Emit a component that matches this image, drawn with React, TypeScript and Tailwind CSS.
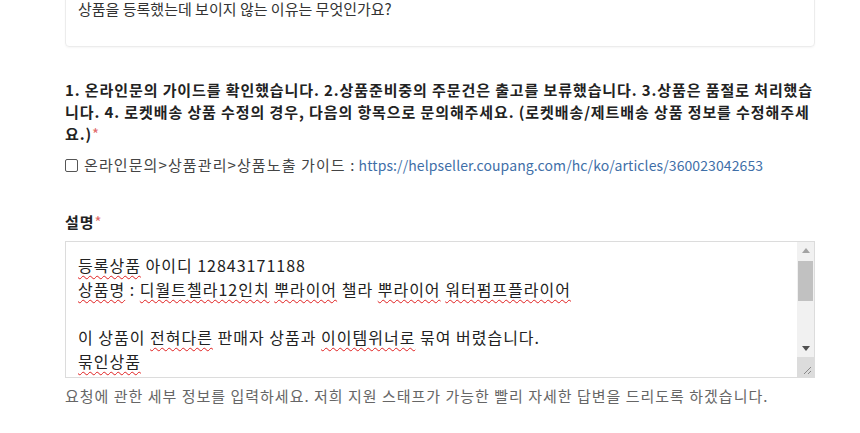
import React from 'react';

const font = { fontFamily: '"Noto Sans CJK KR", "Noto Sans", sans-serif' };

const Wavy: React.FC<{ children: React.ReactNode }> = ({ children }) => (
  <span className="underline decoration-wavy decoration-[#e02020] decoration-1 underline-offset-[3px]">
    {children}
  </span>
);

const Required = () => <span className="text-[#e06a6a] font-normal">*</span>;

const FakeScrollbar = () => (
  <div className="w-[17px] bg-[#f1f1f1] flex flex-col shrink-0">
    <div className="h-[17px] flex items-center justify-center">
      <svg width="8" height="5" viewBox="0 0 8 5">
        <path d="M0 5 L4 0 L8 5 Z" fill="#a3a3a3" />
      </svg>
    </div>
    <div className="h-[40px] bg-[#c1c1c1] mx-[1px] mt-[2px]" />
    <div className="flex-1" />
    <div className="h-[17px] flex items-center justify-center">
      <svg width="8" height="5" viewBox="0 0 8 5">
        <path d="M0 0 L8 0 L4 5 Z" fill="#505050" />
      </svg>
    </div>
    <div className="h-[20px] bg-[#dcdcdc] flex items-end justify-end p-[2px]">
      <svg width="10" height="10" viewBox="0 0 10 10">
        <path d="M9 2 L2 9 M9 6 L6 9" stroke="#888" strokeWidth="1" />
      </svg>
    </div>
  </div>
);

export default function App() {
  return (
    <div className="w-[860px] h-[433px] overflow-hidden bg-white text-[#222]" style={font}>
      <div className="px-[65px] pr-[45px]">
        <div className="-mt-[20px] border border-[#ececec] rounded-[4px] shadow-[0_1px_2px_rgba(0,0,0,0.04)] px-[12px] pt-[17px] pb-[26px] text-[15px] leading-[22px] text-[#333]">
          상품을 등록했는데 보이지 않는 이유는 무엇인가요?
        </div>

        <p className="mt-[32px] text-[15px] leading-[22px] tracking-[0.9px] font-bold text-[#222] pr-[2px]">
          1. 온라인문의 가이드를 확인했습니다. 2.상품준비중의 주문건은 출고를 보류했습니다. 3.상품은 품절로 처리했습니다. 4. 로켓배송 상품 수정의 경우, 다음의 항목으로 문의해주세요. (로켓배송/제트배송 상품 정보를 수정해주세요.)
          <Required />
        </p>

        <label className="mt-[9px] flex items-center gap-[6px] text-[14px] leading-[22px] text-[#444]">
          <span className="w-[13px] h-[13px] border border-[#555] rounded-[2px] bg-white shrink-0" />
          <span>
            <span className="text-[15px] tracking-[1.1px]">온라인문의&gt;상품관리&gt;상품노출 가이드 :</span>{' '}
            <a className="text-[#3f6fa8] tracking-[0.1px]">https://helpseller.coupang.com/hc/ko/articles/360023042653</a>
          </span>
        </label>

        <div className="mt-[35px] text-[15px] leading-[22px] tracking-[1px] font-bold text-[#222]">
          설명<Required />
        </div>

        <div className="mt-[8px] h-[137px] border border-[#dcdcdc] flex bg-white">
          <div className="flex-1 overflow-hidden px-[12px] pt-[11px] text-[16px] leading-[24px] tracking-[1px] text-[#222]">
            <div>
              <Wavy>등록상품</Wavy> 아이디 12843171188
            </div>
            <div>
              <Wavy>상품명</Wavy> : <Wavy>디월트첼라12인치</Wavy> <Wavy>뿌라이어</Wavy> 챌라 <Wavy>뿌라이어</Wavy>{' '}
              <Wavy>워터펌프플라이어</Wavy>
            </div>
            <div className="h-[24px]" />
            <div>
              이 상품이 <Wavy>전혀다른</Wavy> 판매자 상품과 <Wavy>이이템위너로</Wavy> 묶여 버렸습니다.
            </div>
            <div>
              <Wavy>묶인상품</Wavy>
            </div>
          </div>
          <FakeScrollbar />
        </div>

        <p className="mt-[7px] text-[15px] leading-[22px] tracking-[1px] text-[#666]">
          요청에 관한 세부 정보를 입력하세요. 저희 지원 스태프가 가능한 빨리 자세한 답변을 드리도록 하겠습니다.
        </p>
      </div>
    </div>
  );
}
